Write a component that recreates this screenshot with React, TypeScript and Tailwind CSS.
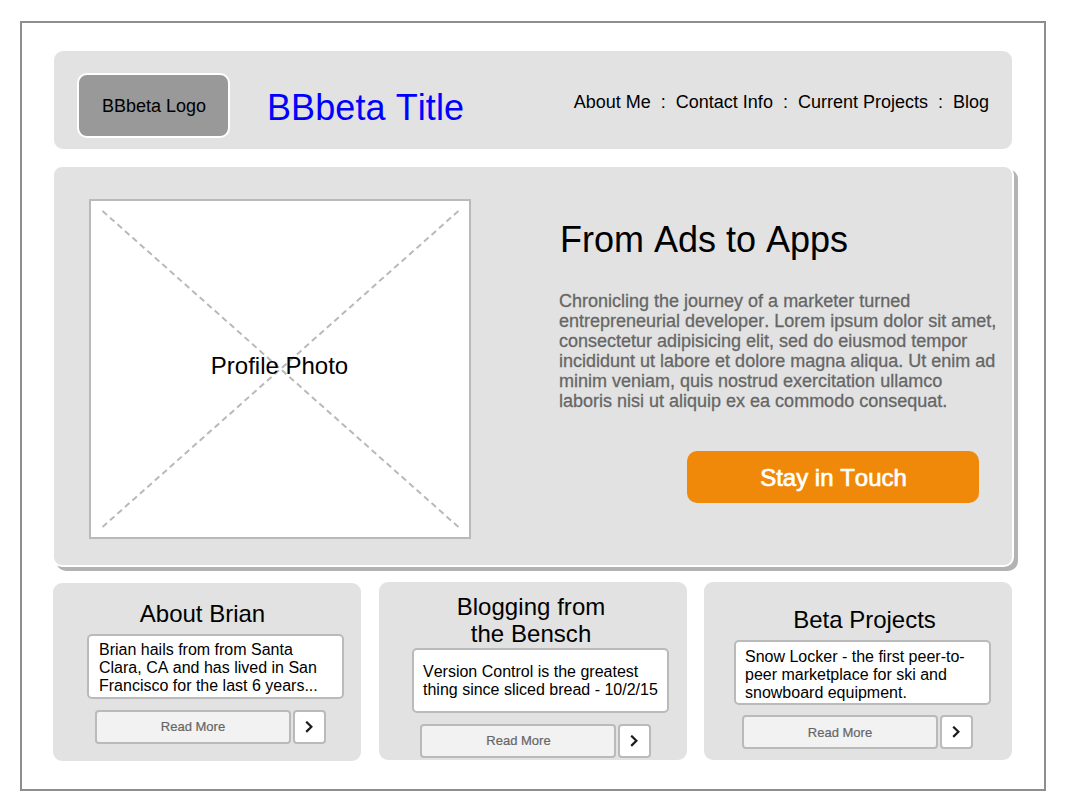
type CardProps = {
  className: string;
  title: string[];
  titleClass: string;
  boxClass: string;
  lines: string[];
  actionsClass: string;
  labelClass: string;
};

const NAV = ["About Me", "Contact Info", "Current Projects", "Blog"];

const INTRO = [
  "Chronicling the journey of a marketer turned",
  "entrepreneurial developer. Lorem ipsum dolor sit amet,",
  "consectetur adipisicing elit, sed do eiusmod tempor",
  "incididunt ut labore et dolore magna aliqua. Ut enim ad",
  "minim veniam, quis nostrud exercitation ullamco",
  "laboris nisi ut aliquip ex ea commodo consequat.",
];

const CARDS: CardProps[] = [
  {
    className: "mt-px -ml-px pl-[34px] pt-[17px]",
    title: ["About Brian"],
    titleClass: "w-[231px]",
    boxClass: "mt-[7px] pl-[10px] pt-[5px]",
    lines: ["Brian hails from from Santa", "Clara, CA and has lived in San", "Francisco for the last 6 years..."],
    actionsClass: "mt-[11px] ml-[8px]",
    labelClass: "pb-[2px]",
  },
  {
    className: "pl-[33px] pt-[11px]",
    title: ["Blogging from", "the Bensch"],
    titleClass: "w-[239px] tracking-[0.05px]",
    boxClass: "mt-px pl-[9.5px] pt-[13px]",
    lines: ["Version Control is the greatest", "thing since sliced bread - 10/2/15"],
    actionsClass: "mt-[11px] ml-[8px]",
    labelClass: "pl-[2px] pb-[2px]",
  },
  {
    className: "pl-[30px] pt-[24px]",
    title: ["Beta Projects"],
    titleClass: "w-[261px]",
    boxClass: "mt-[7px] pl-[9px] pt-[6px]",
    lines: ["Snow Locker - the first peer-to-", "peer marketplace for ski and", "snowboard equipment."],
    actionsClass: "mt-[10px] ml-[8px]",
    labelClass: "pb-0",
  },
];

function Card({ className, title, titleClass, boxClass, lines, actionsClass, labelClass }: CardProps) {
  return (
    <article className={`h-[178px] w-[308px] rounded-[9px] bg-[#e2e2e2] ${className}`}>
      <h2 className={`text-center text-[24px] leading-[27px] ${titleClass}`}>
        {title.map((t) => (
          <span key={t} className="block">{t}</span>
        ))}
      </h2>
      <div className={`h-[65px] w-[257px] rounded-[5px] border-2 border-[#bababa] bg-white text-[16px] leading-[18px] ${boxClass}`}>
        {lines.map((t) => (
          <span key={t} className="block">{t}</span>
        ))}
      </div>
      <div className={`flex gap-[2px] ${actionsClass}`}>
        <button className={`h-[34px] w-[196px] rounded-[4px] border-2 border-[#bababa] bg-[#f2f2f2] text-[13px] leading-[15px] text-[#666666] [-webkit-text-stroke:0.2px_#666666] ${labelClass}`}>
          Read More
        </button>
        <button aria-label="Open" className="flex h-[34px] w-[33px] items-center justify-center rounded-[4px] border-2 border-[#bababa] bg-white pr-px">
          <svg width="8" height="12" viewBox="0 0 8 12" fill="none" stroke="#1c1c1c" strokeWidth="2.2">
            <path d="M1.2 0.7 L6.4 5.7 L1.2 10.9" />
          </svg>
        </button>
      </div>
    </article>
  );
}

export default function App() {
  return (
    <div className="h-[810px] w-[1065px] overflow-hidden bg-white pl-[20px] pt-[21px] font-['Liberation_Sans',Arial,sans-serif] whitespace-nowrap text-black [font-kerning:none]">
      <div className="flex h-[770px] w-[1026px] flex-col border-2 border-[#8e8e8e] pl-[30px] pt-[28px]">
        <header className="ml-[2px] flex h-[98px] w-[958px] shrink-0 items-start rounded-[9px] bg-[#e2e2e2] pl-[23px]">
          <div className="mt-[22px] flex h-[65px] w-[153px] items-center justify-center rounded-[10px] border-2 border-white bg-[#999999] pl-px text-[18px] leading-[20px]">
            BBbeta Logo
          </div>
          <h1 className="mt-[36px] ml-[37px] text-[36px] leading-[41px] tracking-[0.08px] text-[#0000ff]">BBbeta Title</h1>
          <nav className="mt-[41px] mr-[23px] ml-auto flex text-[18px] leading-[20px]">
            {NAV.map((item, i) => (
              <span key={item} className="whitespace-pre">
                {i > 0 ? "  :  " : ""}
                {item}
              </span>
            ))}
          </nav>
        </header>

        <section className="mt-[16px] flex h-[402px] w-[962px] shrink-0 items-start rounded-[10px] border-2 border-white bg-[#e2e2e2] pl-[35px] shadow-[4px_4px_0_#b3b3b3]">
          <div className="relative mt-[32px] flex h-[340px] w-[382px] items-center justify-center border-2 border-[#b9b9b9] bg-white">
            <svg className="absolute top-0 left-0" width="378" height="336" fill="none" stroke="#b9b9b9" strokeWidth="2" strokeDasharray="6 4">
              <path d="M11.5 10 L368 326.5" />
              <path d="M11.5 326 L368 9.5" />
            </svg>
            <span className="relative mr-px mb-[7px] text-[24px] leading-[27px]">Profile Photo</span>
          </div>
          <div className="ml-[88px] pt-[52px]">
            <h2 className="pl-px text-[36px] leading-[41px]">From Ads to Apps</h2>
            <p className="mt-[31px] text-[18px] leading-[20px] text-[#666666] [-webkit-text-stroke:0.3px_#666666]">
              {INTRO.map((t) => (
                <span key={t} className="block">{t}</span>
              ))}
            </p>
            <button className="mt-[40px] ml-[128px] h-[52px] w-[292px] rounded-[10px] bg-[#f0890a] pl-px text-[24px] leading-[27px] text-white [-webkit-text-stroke:0.7px_white]">
              Stay in Touch
            </button>
          </div>
        </section>

        <section className="mt-[15px] ml-[2px] flex w-[958px] items-start justify-between">
          {CARDS.map((card) => (
            <Card key={card.title[0]} {...card} />
          ))}
        </section>
      </div>
    </div>
  );
}
